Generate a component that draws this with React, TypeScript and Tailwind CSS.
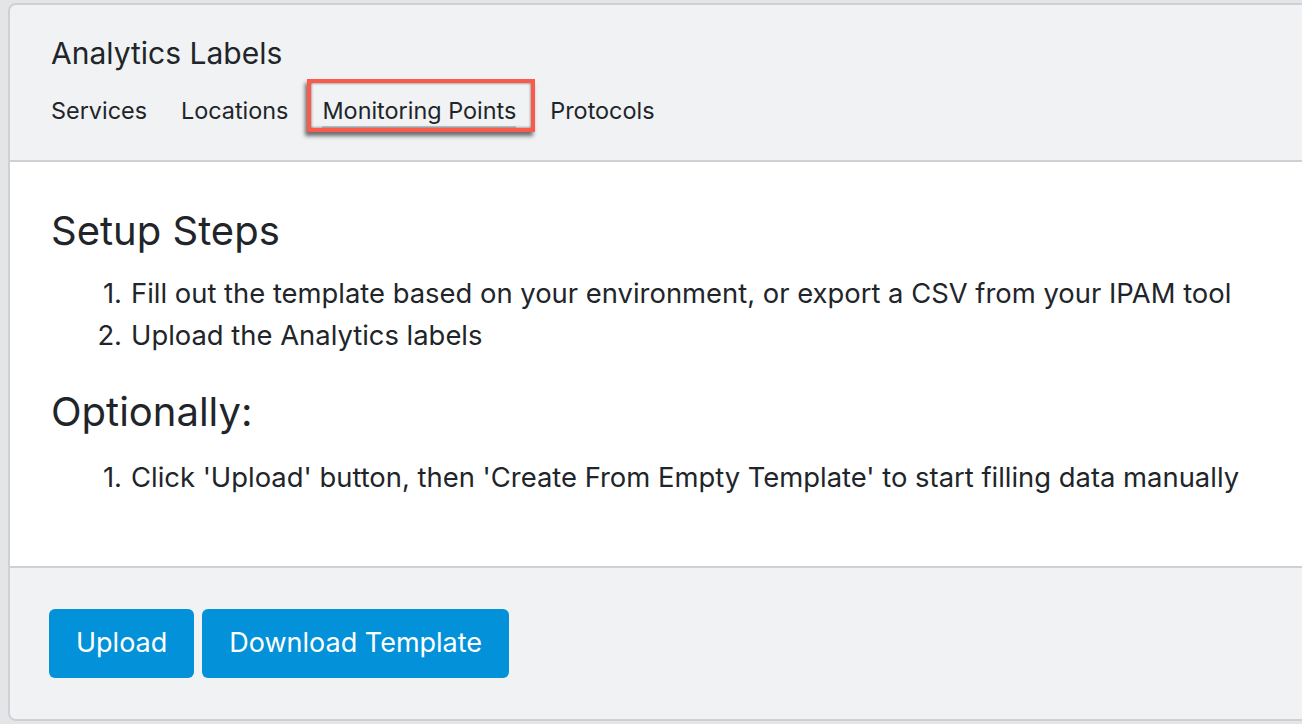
import React from 'react';

const tabs = ['Services', 'Locations', 'Monitoring Points', 'Protocols'];

function Step({ n, children }: { n: number; children: React.ReactNode }) {
  return (
    <li className="flex">
      <span className="w-[45px] shrink-0 text-right pr-[9px]">{n}.</span>
      <span>{children}</span>
    </li>
  );
}

export default function App() {
  return (
    <div
      className="min-h-screen bg-[#e4e5e7] pl-[8px] pt-[3px] overflow-hidden"
      style={{ fontFamily: 'Inter, "Noto Sans", sans-serif' }}
    >
      <div className="w-[1320px] h-[718px] flex flex-col border-2 border-[#cdd1d6] rounded-[8px] overflow-hidden text-[#212529]">
        {/* Header */}
        <div className="h-[157px] shrink-0 bg-[#f0f2f4] border-b-2 border-[#cdd1d6] pl-[41px] pt-[30px]">
          <h1 className="text-[30px] leading-[36px]">Analytics Labels</h1>
          <div className="flex items-start gap-[34px] mt-[25px]">
            {tabs.map((t) =>
              t === 'Monitoring Points' ? (
                <span key={t} className="relative">
                  <span className="block text-[23.4px] leading-[30px] border-b-2 border-[#c8cacd]">{t}</span>
                  {/* annotation highlight */}
                  <span className="absolute -left-[15px] -right-[19px] -top-[17px] -bottom-[4px] border-4 border-[#f85a4b] shadow-[-2px_4px_4px_rgba(0,0,0,0.55),inset_0_0_3px_rgba(0,0,0,0.6)]" />
                </span>
              ) : (
                <span key={t} className="text-[23.4px] leading-[30px]">
                  {t}
                </span>
              )
            )}
          </div>
        </div>

        {/* Body */}
        <div className="h-[406px] shrink-0 bg-white border-b-2 border-[#cdd1d6] pl-[35px] pt-[45px]">
          <h2 className="text-[40px] leading-[48px] pl-[6px]">Setup Steps</h2>
          <ol className="pl-[41px] mt-[17px] text-[27.4px] leading-[42px]">
            <Step n={1}>Fill out the template based on your environment, or export a CSV from your IPAM tool</Step>
            <Step n={2}>Upload the Analytics labels</Step>
          </ol>
          <h2 className="text-[40px] leading-[48px] mt-[32px] pl-[6px]">Optionally:</h2>
          <ol className="pl-[41px] mt-[20px] text-[27.4px] leading-[42px]">
            <Step n={1}>Click 'Upload' button, then 'Create From Empty Template' to start filling data manually</Step>
          </ol>
        </div>

        {/* Footer */}
        <div className="flex-1 bg-[#f0f2f4] pl-[39px] pt-[41px]">
          <div className="flex gap-[8px]">
            <button className="h-[69px] px-[27px] rounded-[6px] bg-[#0392d9] text-white text-[27px]">Upload</button>
            <button className="h-[69px] px-[27px] rounded-[6px] bg-[#0392d9] text-white text-[27px]">Download Template</button>
          </div>
        </div>
      </div>
    </div>
  );
}
